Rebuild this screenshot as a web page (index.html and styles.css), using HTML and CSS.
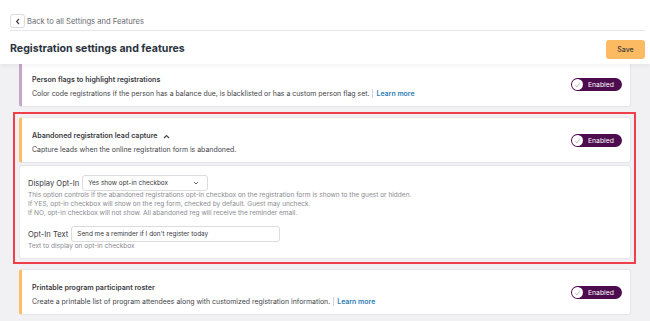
FILE: index.html
```html
<!DOCTYPE html>
<html lang="en">
<head>
    <meta charset="UTF-8">
    <meta name="viewport" content="width=device-width, initial-scale=1.0">
    <title>Registration settings and features</title>
    <link rel="stylesheet" href="styles.css">
</head>
<body>
    <!-- Top bar -->
    <header class="topbar">
        <div class="back-row">
            <a class="back-btn" href="#">
                <svg width="6" height="7" viewBox="0 0 6 7"><path d="M4 1 L1.6 3.5 L4 6" fill="none" stroke="#444" stroke-width="1.2"/></svg>
            </a>
            <span class="back-text">Back to all Settings and Features</span>
        </div>
        <div class="title-row">
            <h1>Registration settings and features</h1>
            <button class="save-btn">Save</button>
        </div>
    </header>

    <main class="features">
        <!-- Person flags -->
        <section class="feature accent-purple">
            <div class="feature-info">
                <div class="feature-title">Person flags to highlight registrations</div>
                <div class="feature-desc">Color code registrations if the person has a balance due, is blacklisted or has a custom person flag set.<span class="learn-more">Learn more</span></div>
            </div>
            <div class="toggle">
                <span class="knob"><svg width="7" height="6" viewBox="0 0 7 6"><path d="M1 3.2 L2.8 5 L6 1" fill="none" stroke="#b9b9c0" stroke-width="1"/></svg></span>
                <span class="toggle-label">Enabled</span>
            </div>
        </section>

        <!-- Abandoned registration (highlighted) -->
        <div class="highlight">
            <section class="feature accent-orange">
                <div class="feature-info">
                    <div class="feature-title">Abandoned registration lead capture
                        <svg class="caret" width="7" height="5" viewBox="0 0 7 5"><path d="M1 4 L3.5 1.5 L6 4" fill="none" stroke="#444" stroke-width="1.1"/></svg>
                    </div>
                    <div class="feature-desc">Capture leads when the online registration form is abandoned.</div>
                </div>
                <div class="toggle">
                    <span class="knob"><svg width="7" height="6" viewBox="0 0 7 6"><path d="M1 3.2 L2.8 5 L6 1" fill="none" stroke="#b9b9c0" stroke-width="1"/></svg></span>
                    <span class="toggle-label">Enabled</span>
                </div>
            </section>

            <div class="options">
                <div class="field-row">
                    <label class="field-label">Display Opt-In</label>
                    <div class="select-box">
                        <span>Yes show opt-in checkbox</span>
                        <svg width="6" height="4" viewBox="0 0 6 4"><path d="M1 1 L3 3 L5 1" fill="none" stroke="#555" stroke-width="0.9"/></svg>
                    </div>
                </div>
                <div class="help">
                    This option controls if the abandoned registrations opt-in checkbox on the registration form is shown to the guest or hidden.<br>
                    If YES, opt-in checkbox will show on the reg form, checked by default. Guest may uncheck.<br>
                    If NO, opt-in checkbox will not show. All abandoned reg will receive the reminder email.
                </div>

                <div class="field-row spaced">
                    <label class="field-label">Opt-In Text</label>
                    <div class="text-input">Send me a reminder if I don't register today</div>
                </div>
                <div class="help">Text to display on opt-in checkbox</div>
            </div>
        </div>

        <!-- Printable roster -->
        <section class="feature accent-orange">
            <div class="feature-info">
                <div class="feature-title">Printable program participant roster</div>
                <div class="feature-desc">Create a printable list of program attendees along with customized registration information.<span class="learn-more">Learn more</span></div>
            </div>
            <div class="toggle">
                <span class="knob"><svg width="7" height="6" viewBox="0 0 7 6"><path d="M1 3.2 L2.8 5 L6 1" fill="none" stroke="#b9b9c0" stroke-width="1"/></svg></span>
                <span class="toggle-label">Enabled</span>
            </div>
        </section>
    </main>
</body>
</html>
```

FILE: styles.css
```css
body {
    margin: 0;
    padding: 0;
    font-family: Inter, "Noto Sans", sans-serif;
    background-color: #f1f1f4;
    color: #3b3b3b;
    height: 321px;
    overflow: hidden;
}
.topbar {
    position: relative;
    z-index: 1;
    background: #ffffff;
    padding: 0 5px 0 10px;
    height: 64px;
    box-sizing: border-box;
    box-shadow: 0 2px 4px rgba(0, 0, 0, 0.05);
}
.back-row {
    display: flex;
    align-items: center;
    gap: 2px;
    padding: 14px 0 2px;
    border-bottom: 1px solid #e6e6ea;
}
.back-btn {
    display: flex;
    align-items: center;
    justify-content: center;
    width: 13px;
    height: 12px;
    border: 1px solid #dcdce0;
    border-radius: 3px;
}
.back-text {
    font-size: 7.6px;
    color: #6b6b72;
}
.title-row {
    display: flex;
    align-items: center;
    justify-content: space-between;
    height: 34px;
}
h1 {
    margin: 0;
    font-size: 10.6px;
    font-weight: 700;
    color: #2c3340;
}
.save-btn {
    width: 39px;
    height: 19px;
    margin-top: 2px;
    border: none;
    border-radius: 3px;
    background-color: #fcbb62;
    color: #3a3a3a;
    font-family: inherit;
    font-size: 7px;
    font-weight: 500;
    padding: 0;
}
.features {
    display: flex;
    flex-direction: column;
    gap: 5px;
    padding: 0 19px;
    margin-top: -3px;
}
.feature {
    display: flex;
    align-items: center;
    justify-content: space-between;
    background: #ffffff;
    border: 1px solid #e4e4e9;
    border-left: 3px solid #c3a4c5;
    border-radius: 3px;
    padding: 13px 8px 7px 10px;
}
.accent-purple {
    border-left-color: #c5a6c7;
}
.accent-orange {
    border-left-color: #fdbd63;
}
.feature-info {
    display: flex;
    flex-direction: column;
    gap: 4px;
}
.feature-title {
    font-size: 7.1px;
    font-weight: 600;
    line-height: 10px;
    color: #3a3a3e;
    display: flex;
    align-items: center;
    gap: 5px;
}
.feature-desc {
    font-size: 6.95px;
    line-height: 10px;
    color: #444448;
}
.learn-more {
    color: #2b7db5;
    font-weight: 600;
    border-left: 1px solid #d4d4d8;
    margin-left: 3px;
    padding-left: 3px;
}
.toggle {
    display: flex;
    align-items: center;
    gap: 5px;
    width: 51px;
    height: 13px;
    box-sizing: border-box;
    padding: 0 1px;
    border-radius: 7px;
    background-color: #4c0c4e;
    margin-top: -5px;
}
.knob {
    display: flex;
    align-items: center;
    justify-content: center;
    width: 11px;
    height: 11px;
    border-radius: 50%;
    background: #ffffff;
}
.toggle-label {
    font-size: 6.8px;
    color: #ffffff;
}
.highlight {
    display: flex;
    flex-direction: column;
    gap: 2px;
    border: 2px solid #ee3f4b;
    padding: 3px 3px 3px 4px;
    margin: 0 -5px 0 -6px;
}
.options {
    background: #ffffff;
    border: 1px solid #e4e4e9;
    border-radius: 3px;
    padding: 9px 9px 7px 8px;
}
.field-row {
    display: flex;
    align-items: center;
    gap: 3px;
}
.field-row.spaced {
    margin-top: 8px;
}
.field-label {
    font-size: 7.6px;
    color: #3a3a3e;
}
.select-box, .text-input {
    display: flex;
    align-items: center;
    justify-content: space-between;
    height: 16px;
    box-sizing: border-box;
    padding: 0 8px 0 5px;
    border: 1px solid #dcdce0;
    border-radius: 3px;
    font-size: 6.4px;
    color: #3a3a3e;
}
.select-box {
    width: 126px;
}
.text-input {
    width: 209px;
}
.help {
    font-size: 6.55px;
    line-height: 9px;
    color: #8a8a90;
}
```
